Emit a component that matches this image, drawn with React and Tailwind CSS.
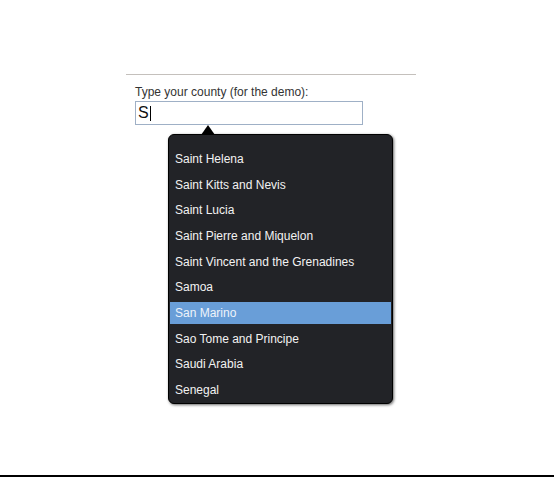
import React from "react";

const countries = [
  "Saint Helena",
  "Saint Kitts and Nevis",
  "Saint Lucia",
  "Saint Pierre and Miquelon",
  "Saint Vincent and the Grenadines",
  "Samoa",
  "San Marino",
  "Sao Tome and Principe",
  "Saudi Arabia",
  "Senegal",
];

const selected = "San Marino";

const Suggestions = () => (
  <div className="absolute left-[33px] top-[24px]">
    <svg width="14" height="10" viewBox="0 0 14 10" className="ml-[33px] block">
      <path d="M0 10 L7 0 L14 10 Z" fill="#000" />
    </svg>
    <div className="w-[225px] h-[270px] -mt-px bg-[#222327] border border-black rounded-[6px] shadow-[1px_1px_3px_rgba(0,0,0,0.6)] pt-[13px] pl-px pr-px flex flex-col gap-[3.67px]">
      {countries.map((c) => (
        <div
          key={c}
          className={
            c === selected
              ? "h-[22px] flex items-center pl-[5px] bg-[#699ed8] text-[#eef3fa]"
              : "h-[22px] flex items-center pl-[5px] text-[#f2f2f2]"
          }
        >
          {c}
        </div>
      ))}
    </div>
  </div>
);

export default function App() {
  return (
    <div className="h-screen flex flex-col bg-white font-['Liberation_Sans',Arial,sans-serif] text-[12px]">
      <div className="pt-[74px]">
        <div className="ml-[126px] w-[290px] h-px bg-[#c4c0bc]" />
        <div className="ml-[135px] mt-[10px]">
          <div className="text-[#333] leading-[14px]">Type your county (for the demo):</div>
          <div className="relative mt-[2px]">
            <div className="w-[228px] h-[24px] border border-[#9fb0c6] flex items-center pl-[2px] text-[16px] text-[#111] leading-none">
              <span>S</span>
              <span className="w-px h-[15px] bg-black ml-px" />
            </div>
            <Suggestions />
          </div>
        </div>
      </div>
      <div className="flex-1" />
      <div className="h-[2px] bg-black" />
    </div>
  );
}
